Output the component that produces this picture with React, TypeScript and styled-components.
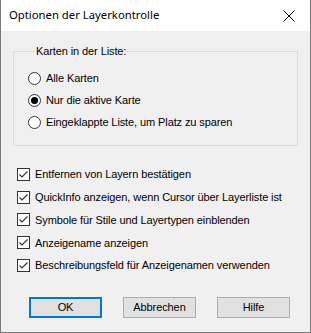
import React from "react";
import styled, { createGlobalStyle } from "styled-components";

const GlobalStyle = createGlobalStyle`
  html, body {
    margin: 0;
    padding: 0;
    background: #f0f0f0;
  }
`;

const Window = styled.div({
  width: 311,
  height: 333,
  boxSizing: "border-box",
  borderLeft: "1px solid #7a7a7a",
  borderRight: "1px solid #7a7a7a",
  borderBottom: "1px solid #7a7a7a",
  background: "#f0f0f0",
  display: "flex",
  flexDirection: "column",
  fontFamily: '"Liberation Sans", Arial, sans-serif',
  fontSize: 11,
  letterSpacing: "-0.1px",
  color: "#000",
});

const TitleBar = styled.div({
  height: 31,
  background: "#fff",
  display: "flex",
  alignItems: "center",
  justifyContent: "space-between",
  padding: "0 0 0 8px",
  flexShrink: 0,
});

const Title = styled.span({
  fontFamily: '"Noto Sans", "Open Sans", sans-serif',
  fontSize: 11.3,
  letterSpacing: 0,
  color: "#000",
  marginTop: -2,
});

const CloseButton = styled.div({
  width: 46,
  height: 31,
  display: "flex",
  alignItems: "center",
  justifyContent: "center",
  marginRight: -2,
});

const Body = styled.div({
  flex: 1,
  display: "flex",
  flexDirection: "column",
  padding: "14px 12px 0 12px",
});

const GroupBox = styled.fieldset({
  margin: 0,
  padding: "9px 0 6px 14px",
  border: "1px solid #dcdcdc",
  width: 285,
  height: 101,
  boxSizing: "border-box",
  display: "flex",
  flexDirection: "column",
});

const Legend = styled.legend({
  padding: "0 1px",
  marginLeft: 7,
  lineHeight: "13px",
});

const OptionRow = styled.label<{ $h: number }>(({ $h }) => ({
  height: $h,
  display: "flex",
  alignItems: "center",
  gap: 5,
  whiteSpace: "nowrap",
}));

const RadioCircle = styled.span<{ $on?: boolean }>(({ $on }) => ({
  width: 13,
  height: 13,
  boxSizing: "border-box",
  borderRadius: "50%",
  border: "1px solid #333",
  background: "#fff",
  display: "flex",
  alignItems: "center",
  justifyContent: "center",
  flexShrink: 0,
  "&::after": {
    content: '""',
    width: 7,
    height: 7,
    borderRadius: "50%",
    background: $on ? "#000" : "transparent",
  },
}));

const CheckBox = styled.span({
  width: 13,
  height: 13,
  boxSizing: "border-box",
  border: "1px solid #333",
  background: "#fff",
  display: "flex",
  alignItems: "center",
  justifyContent: "center",
  flexShrink: 0,
});

const CheckList = styled.div({
  display: "flex",
  flexDirection: "column",
  padding: "17px 0 0 4px",
});

const ButtonRow = styled.div({
  display: "flex",
  gap: 21,
  padding: "20px 0 0 16px",
});

const Button = styled.div<{ $default?: boolean }>(({ $default }) => ({
  width: 73,
  height: 21,
  boxSizing: "border-box",
  background: "#e1e1e1",
  border: $default ? "2px solid #0078d7" : "1px solid #adadad",
  display: "flex",
  alignItems: "center",
  justifyContent: "center",
}));

const Check = () => (
  <svg width="11" height="11" viewBox="0 0 11 11">
    <path d="M1.5 5.5 L4 8 L9.5 2.5" fill="none" stroke="#333" strokeWidth="1.2" />
  </svg>
);

const radios = [
  { text: "Alle Karten", on: false },
  { text: "Nur die aktive Karte", on: true },
  { text: "Eingeklappte Liste, um Platz zu sparen", on: false },
];

const checks = [
  "Entfernen von Layern bestätigen",
  "QuickInfo anzeigen, wenn Cursor über Layerliste ist",
  "Symbole für Stile und Layertypen einblenden",
  "Anzeigename anzeigen",
  "Beschreibungsfeld für Anzeigenamen verwenden",
];

export default function App() {
  return (
    <>
      <GlobalStyle />
      <Window>
        <TitleBar>
          <Title>Optionen der Layerkontrolle</Title>
          <CloseButton>
            <svg width="12" height="12" viewBox="0 0 12 12">
              <path d="M0.5 0.5 L11.5 11.5 M11.5 0.5 L0.5 11.5" stroke="#000" strokeWidth="1" />
            </svg>
          </CloseButton>
        </TitleBar>
        <Body>
          <GroupBox>
            <Legend>Karten in der Liste:</Legend>
            {radios.map((r) => (
              <OptionRow key={r.text} $h={22}>
                <RadioCircle $on={r.on} />
                {r.text}
              </OptionRow>
            ))}
          </GroupBox>
          <CheckList>
            {checks.map((c) => (
              <OptionRow key={c} $h={22.75}>
                <CheckBox>
                  <Check />
                </CheckBox>
                {c}
              </OptionRow>
            ))}
          </CheckList>
          <ButtonRow>
            <Button $default>OK</Button>
            <Button>Abbrechen</Button>
            <Button>Hilfe</Button>
          </ButtonRow>
        </Body>
      </Window>
    </>
  );
}
